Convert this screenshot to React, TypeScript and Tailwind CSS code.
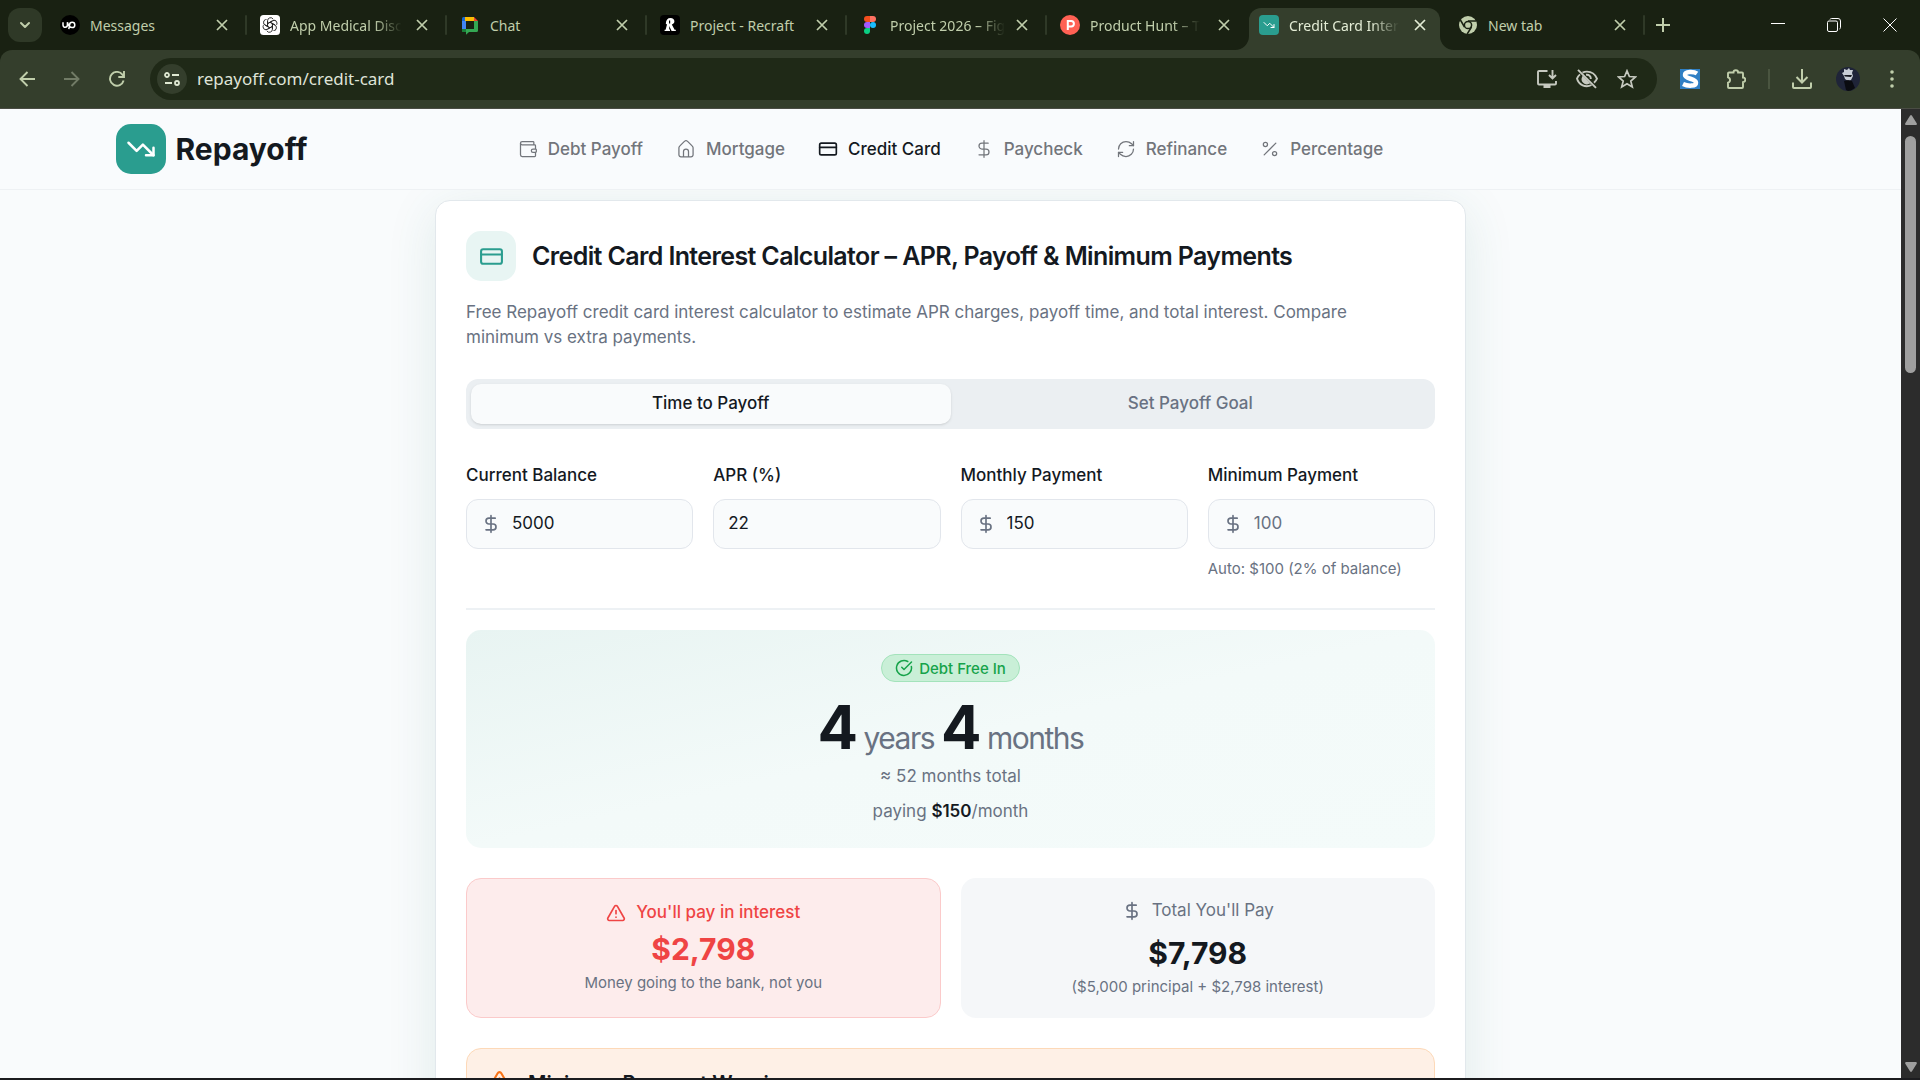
import React from "react";
import {
  ChevronDown,
  CircleCheckBig,
  CreditCard,
  DollarSign,
  Percent,
  RefreshCw,
  TrendingDown,
  TriangleAlert,
  Wallet,
} from "lucide-react";

/* ---------- browser favicons ---------- */

const UpworkIcon = () => (
  <svg viewBox="0 0 20 20" className="size-5">
    <circle cx="10" cy="10" r="10" fill="#000" />
    <path
      d="M3 7.2v2.9a2.2 2.2 0 0 0 4.4 0V7.2c.7 2.6 2.3 5.3 4.8 5.3a2.6 2.6 0 1 0-2.6-2.6L8.8 14.2"
      fill="none"
      stroke="#fff"
      strokeWidth="1.5"
    />
  </svg>
);

const OpenAiIcon = () => (
  <svg viewBox="0 0 20 20" className="size-5">
    <rect width="20" height="20" rx="3.5" fill="#fff" />
    <g fill="none" stroke="#222" strokeWidth=".9">
      {[0, 60, 120, 180, 240, 300].map((a) => (
        <path key={a} transform={`rotate(${a} 10 10)`} d="M7.600 11.400V5.700a3 3 0 0 1 5.600-1.500M7.600 8.600l4.800-2.800" />
      ))}
    </g>
  </svg>
);

const ChatIcon = () => (
  <svg viewBox="0 0 20 20" className="size-5">
    <path d="M5 2h9v4H5z" fill="#fbbc04" />
    <path d="M2 3.5A1.5 1.5 0 0 1 3.5 2H5v4H2z" fill="#1967d2" />
    <path d="M2 6h4v8H2z" fill="#4285f4" />
    <path d="M14 2l4 4h-4z" fill="#ea4335" />
    <path d="M14 6h4v9.5a1.5 1.5 0 0 1-1.5 1.5H9l-3 2.8V17H3.5A1.5 1.5 0 0 1 2 15.500V14h12z" fill="#34a853" />
    <path d="M2 14h4v3H3.5A1.5 1.5 0 0 1 2 15.500z" fill="#188038" />
  </svg>
);

const RecraftIcon = () => (
  <svg viewBox="0 0 20 20" className="size-5">
    <rect width="20" height="20" rx="4" fill="#000" />
    <path
      d="M10.5 3c2.4 0 3.9 1.3 3.9 3.3 0 1.7-1 2.8-2.6 3.2l2.8 5.2h1.2V16h-4.2l-2.4-5v3.6h.8V16H4.6v-1.3h1L7 9.5 5.8 8.8C6 5 7.6 3 10.5 3z"
      fill="#fff"
    />
    <path d="M9.6 5.5v3" stroke="#000" strokeWidth="1.2" />
  </svg>
);

const FigmaIcon = () => (
  <svg viewBox="0 0 20 20" className="size-5">
    <path d="M7 1h3v6H7a3 3 0 0 1 0-6z" fill="#f24e1e" />
    <path d="M10 1h3a3 3 0 0 1 0 6h-3z" fill="#ff7262" />
    <path d="M7 7h3v6H7a3 3 0 0 1 0-6z" fill="#a259ff" />
    <circle cx="13" cy="10" r="3" fill="#1abcfe" />
    <path d="M7 13h3v3a3 3 0 1 1-3-3z" fill="#0acf83" />
  </svg>
);

const ProductHuntIcon = () => (
  <svg viewBox="0 0 20 20" className="size-5">
    <circle cx="10" cy="10" r="10" fill="#ff6154" />
    <path d="M7.8 15V6h3.4a2.7 2.7 0 0 1 0 5.4H7.8" fill="none" stroke="#fff" strokeWidth="2" />
  </svg>
);

const RepayoffIcon = () => (
  <span className="flex size-5 items-center justify-center rounded bg-[#2a9d8f] text-white">
    <TrendingDown className="size-3" />
  </span>
);

const ChromeIcon = () => (
  <svg viewBox="0 0 20 20" className="size-5">
    <circle cx="10" cy="10" r="9" fill="#c0ceab" />
    <circle cx="10" cy="10" r="3.6" fill="none" stroke="#192112" strokeWidth="1.5" />
    <path d="M10 6h8.2M13.500 12l-4.300 7M6.500 12L2.400 5" stroke="#192112" strokeWidth="1.5" fill="none" />
  </svg>
);

/* ---------- browser chrome ---------- */

const TabClose = ({ label }: { label: string }) => (
  <button aria-label={`Close ${label}`} className="flex size-5 shrink-0 items-center justify-center">
    <svg viewBox="0 0 12 12" className="size-3" fill="none" stroke="currentColor" strokeWidth="1.7">
      <path d="M1 1l10 10M11 1L1 11" />
    </svg>
  </button>
);

const tabs = [
  { title: "Messages", icon: <UpworkIcon /> },
  { title: "App Medical Disc", icon: <OpenAiIcon />, fade: true },
  { title: "Chat", icon: <ChatIcon /> },
  { title: "Project - Recraft", icon: <RecraftIcon /> },
  { title: "Project 2026 – Fig", icon: <FigmaIcon />, fade: true },
  { title: "Product Hunt – T", icon: <ProductHuntIcon />, fade: true },
  { title: "Credit Card Inter", icon: <RepayoffIcon />, fade: true, active: true },
  { title: "New tab", icon: <ChromeIcon /> },
];

const TabTitle = ({ title, fade }: { title: string; fade?: boolean }) => (
  <span
    className={
      fade
        ? "ml-2.5 text-[14px] whitespace-nowrap [mask-image:linear-gradient(to_right,black_75%,transparent)]"
        : "ml-2.5 text-[14px] whitespace-nowrap"
    }
  >
    {title}
  </span>
);

const TabFoot = ({ flip }: { flip?: boolean }) => (
  <svg
    viewBox="0 0 14 14"
    className={
      flip ? "absolute bottom-0 left-full size-3.5 -scale-x-100" : "absolute right-full bottom-0 size-3.5"
    }
  >
    <path d="M14 0v14H0A14 14 0 0 0 14 0z" fill="#343e2c" />
  </svg>
);

function TabStrip() {
  return (
    <div className="flex h-[50px] items-center bg-[#192112] pr-0.5 pl-2 text-[#c0ceab]">
      <button
        aria-label="Search tabs"
        className="flex h-[34px] w-[34px] items-center justify-center rounded-xl bg-[#2f3927]"
      >
        <ChevronDown className="size-4" strokeWidth={3} />
      </button>
      <div className="ml-[5px] flex h-full min-w-0">
        {tabs.map((t, i) =>
          t.active ? (
            <div key={t.title} className="flex h-full w-[198px] pl-0.5">
              <div className="relative flex h-[42px] w-[191px] items-center self-end rounded-t-xl bg-[#343e2c] px-2.5 pb-2 text-[#e3ecd5]">
                <TabFoot />
                <TabFoot flip />
                {t.icon}
                <TabTitle title={t.title} fade />
                <span className="flex-1" />
                <TabClose label={t.title} />
              </div>
            </div>
          ) : (
            <div key={t.title} className="flex h-full w-[200px] items-center">
              <div className="flex flex-1 items-center px-[13px]">
                {t.icon}
                <TabTitle title={t.title} fade={t.fade} />
                <span className="flex-1" />
                <TabClose label={t.title} />
              </div>
              {i !== 5 && <div className="h-5 w-0.5 rounded bg-[#2f3927]" />}
            </div>
          ),
        )}
      </div>
      <button aria-label="New tab" className="ml-1 flex size-7 items-center justify-center">
        <svg viewBox="0 0 14 14" className="size-3.5" stroke="currentColor" strokeWidth="2">
          <path d="M7 0v14M0 7h14" />
        </svg>
      </button>
      <div className="ml-auto flex text-white">
        <button aria-label="Minimize" className="flex h-10 w-14 items-center justify-center">
          <svg viewBox="0 0 14 14" className="size-3.5" stroke="currentColor">
            <path d="M0 5.5h14" />
          </svg>
        </button>
        <button aria-label="Restore" className="flex h-10 w-14 items-center justify-center">
          <svg viewBox="0 0 14 14" className="size-3.5" fill="none" stroke="currentColor">
            <rect x=".5" y="3" width="10" height="10.5" rx="1.5" />
            <path d="M3 1.5c.3-.7.7-1 1.5-1H11A2.5 2.5 0 0 1 13.5 3v6.5c0 .8-.4 1.3-1 1.5" />
          </svg>
        </button>
        <button aria-label="Close window" className="flex h-10 w-14 items-center justify-center">
          <svg viewBox="0 0 14 14" className="size-3.5" stroke="currentColor">
            <path d="M.5.5l13 13M13.5.5l-13 13" />
          </svg>
        </button>
      </div>
    </div>
  );
}

const IconButton = ({ label, children }: { label: string; children: React.ReactNode }) => (
  <button aria-label={label} className="flex size-10 shrink-0 items-center justify-center">
    {children}
  </button>
);

function Toolbar() {
  return (
    <div className="bg-[#192112]">
      <div className="flex h-[58px] items-center rounded-t-xl bg-[#343e2c] pl-[7px] text-[#c0ceab]">
        <div className="flex gap-[5px]">
          <IconButton label="Back">
            <svg viewBox="0 0 16 16" className="size-4" fill="none" stroke="currentColor" strokeWidth="1.9">
              <path d="M16 8H1.5M8.5 1L1.5 8l7 7" />
            </svg>
          </IconButton>
          <IconButton label="Forward">
            <svg viewBox="0 0 16 16" className="size-4 text-[#717b66]" fill="none" stroke="currentColor" strokeWidth="1.9">
              <path d="M0 8h14.5M7.5 1l7 7-7 7" />
            </svg>
          </IconButton>
          <IconButton label="Reload">
            <svg viewBox="0 0 16 16" className="size-4" fill="none" stroke="currentColor" strokeWidth="1.9">
              <path d="M14.6 9.5A6.9 6.9 0 1 1 13.4 3.6L15 5.500M15 0v6H9.300" />
            </svg>
          </IconButton>
        </div>
        <div className="ml-[13px] flex h-[42px] flex-1 items-center rounded-full bg-[#1f2917] pr-[10px] pl-[7px]">
          <button
            aria-label="View site information"
            className="flex size-[30px] items-center justify-center rounded-full bg-[#343e2c] text-[#dfe8d2]"
          >
            <svg viewBox="0 0 16 16" className="size-4" fill="none" stroke="currentColor" strokeWidth="1.8">
              <circle cx="3" cy="4" r="2" />
              <path d="M8 4h7M1 12h7" />
              <circle cx="13" cy="12" r="2" />
            </svg>
          </button>
          <input
            aria-label="Address"
            defaultValue="repayoff.com/credit-card"
            className="ml-2.5 min-w-0 flex-1 bg-transparent text-[17px] text-[#dfe3d8] outline-none"
          />
          <div className="flex text-[#c6c9c0]">
            <IconButton label="Install app">
              <svg viewBox="0 0 20 20" className="size-5" fill="none" stroke="currentColor" strokeWidth="1.9">
                <path d="M10.5 2H2a1 1 0 0 0-1 1v11.5a1 1 0 0 0 1 1h16a1 1 0 0 0 1-1V12M15.500 1v8M12 6l3.500 3.500L19 6" />
                <path d="M6.5 17.5h7" strokeWidth="3" />
              </svg>
            </IconButton>
            <IconButton label="Tracking protection">
              <svg viewBox="0 0 24 20" className="h-5 w-6" fill="none" stroke="currentColor" strokeWidth="1.9">
                <path d="M7.5 3.6A10 10 0 0 1 12 2.6c4.3 0 8.2 2.7 10 7-.7 1.6-1.7 3-3 4.200M16.500 16A10 10 0 0 1 2 9.600 11 11 0 0 1 5 5.400M11 5.800c3-.5 5 1.600 4.800 4.200" />
                <path d="M8 8.2A4.3 4.3 0 0 0 13.7 14z" fill="currentColor" />
                <path d="M3 .8l18 18" />
              </svg>
            </IconButton>
            <IconButton label="Bookmark this tab">
              <svg viewBox="0 0 20 20" className="size-5" fill="none" stroke="currentColor" strokeWidth="1.7">
                <path d="M10 1.8l2.4 5.7 6.1.5-4.7 4 1.5 6-5.3-3.2L4.7 18l1.500-6L1.500 8l6.100-.5z" />
              </svg>
            </IconButton>
          </div>
        </div>
        <div className="ml-[13px] flex items-center pr-2">
          <IconButton label="S extension">
            <svg viewBox="0 0 20 20" className="size-5">
              <rect width="20" height="20" fill="#2f7fc4" />
              <path
                d="M17 4.5C14 2.5 5 2 5 6s11 3.5 11 7.700c0 3.600-8 3.700-13 1.300"
                fill="none"
                stroke="#fff"
                strokeWidth="4.5"
              />
            </svg>
          </IconButton>
          <span className="w-[6px]" />
          <IconButton label="Extensions">
            <svg viewBox="0 0 20 20" className="size-5" fill="none" stroke="currentColor" strokeWidth="1.9">
              <path d="M3 3.5h4.5a2.300 2.300 0 0 1 4.600 0H16a1 1 0 0 1 1 1V8.500a2.300 2.300 0 0 1 0 4.600V18a1 1 0 0 1-1 1H3a1 1 0 0 1-1-1v-4.300a2.800 2.800 0 0 0 0-5.400V4.500a1 1 0 0 1 1-1z" />
            </svg>
          </IconButton>
          <span className="mx-3 h-5 w-0.5 bg-[#4a5540]" />
          <IconButton label="Downloads">
            <svg viewBox="0 0 20 20" className="size-5" fill="none" stroke="currentColor" strokeWidth="2">
              <path d="M10 0v13M4.5 8l5.500 5.500L15.500 8M1 13.500V18a1 1 0 0 0 1 1h16a1 1 0 0 0 1-1v-4.500" />
            </svg>
          </IconButton>
          <span className="w-[6px]" />
          <IconButton label="Profile">
            <svg viewBox="0 0 24 24" className="size-6">
              <circle cx="12" cy="12" r="12" fill="#1f2438" />
              <path d="M6 6l2-1 0-3 3 1 2-2 1 2 3 0-1 3 1 3-2 4-3 1-3-2-1-3z" fill="#c9ced6" />
              <path d="M8 8h8l-1 2-6-.5z" fill="#15171f" />
              <path d="M8 14l4-1 4 1 3 7-4 2.600L12 24l-2-1z" fill="#0a0b10" />
            </svg>
          </IconButton>
          <span className="w-1" />
          <IconButton label="Menu">
            <svg viewBox="0 0 4 18" className="h-[18px] w-1" fill="currentColor">
              <circle cx="2" cy="2" r="1.8" />
              <circle cx="2" cy="9" r="1.8" />
              <circle cx="2" cy="16" r="1.8" />
            </svg>
          </IconButton>
        </div>
      </div>
      <div className="h-px bg-[#4a4c44]" />
    </div>
  );
}

/* ---------- page ---------- */

type IconProps = { className?: string; strokeWidth?: number };

const HomeIcon = ({ className, strokeWidth }: IconProps) => (
  <svg
    viewBox="0 0 24 24"
    className={className}
    fill="none"
    stroke="currentColor"
    strokeWidth={strokeWidth}
    strokeLinejoin="round"
  >
    <path d="M3.5 10.600c0-.8.300-1.500.900-2l6-6a2.200 2.200 0 0 1 3.200 0l6 6c.600.500.900 1.200.900 2V19a2.500 2.500 0 0 1-2.500 2.500H6A2.500 2.500 0 0 1 3.500 19z" />
    <path d="M9 21.500V15a3 3 0 0 1 6 0v6.500" />
  </svg>
);

const navItems = [
  { label: "Debt Payoff", Icon: Wallet },
  { label: "Mortgage", Icon: HomeIcon },
  { label: "Credit Card", Icon: CreditCard, active: true },
  { label: "Paycheck", Icon: DollarSign },
  { label: "Refinance", Icon: RefreshCw },
  { label: "Percentage", Icon: Percent },
];

function SiteHeader() {
  return (
    <header className="relative z-10 border-b border-[#eef1f4] bg-[#f9fbfd]">
      <div className="mx-auto grid h-20 max-w-[1750px] grid-cols-[1fr_auto_1fr] items-center px-10">
        <a href="#" className="flex items-center gap-2.5">
          <span className="flex size-[50px] items-center justify-center rounded-[15px] bg-[#2a9d8f] text-white">
            <TrendingDown className="size-[30px]" />
          </span>
          <span className="text-[30px] leading-9 font-bold text-[#14191f]">Repayoff</span>
        </a>
        <nav className="flex gap-[33px]">
          {navItems.map(({ label, Icon, active }) => (
            <a
              key={label}
              href="#"
              className={
                active
                  ? "flex items-center gap-2.5 text-[17px] leading-[26px] font-medium text-[#14191f]"
                  : "flex items-center gap-2.5 text-[17px] leading-[26px] font-medium text-[#72757b]"
              }
            >
              <Icon className="size-5" strokeWidth={active ? 2 : 1.5} />
              {label}
            </a>
          ))}
        </nav>
      </div>
    </header>
  );
}

type FieldProps = { id: string; label: string; value?: string; placeholder?: string; money?: boolean; hint?: string };

const Field = ({ id, label, value, placeholder, money, hint }: FieldProps) => (
  <div className="flex flex-col">
    <label htmlFor={id} className="mb-3 text-[17px] leading-6 font-medium">
      {label}
    </label>
    <div className="flex h-[50px] items-center rounded-xl border border-[#e2e6ec] bg-[#f9fbfc] pr-[15px] pl-3.5">
      {money && <DollarSign className="mr-[11px] size-5 shrink-0 text-[#697282]" />}
      <input
        id={id}
        defaultValue={value}
        placeholder={placeholder}
        className="w-full min-w-0 bg-transparent text-[17px] outline-none placeholder:text-[#697282]"
      />
    </div>
    {hint && <p className="mt-2.5 text-[15px] leading-5 text-[#697282]">{hint}</p>}
  </div>
);

function Calculator() {
  return (
    <section className="mx-auto w-full max-w-[1031px] shrink-0 rounded-[15px] border border-[#e2e8ec] bg-white p-[30px] text-[#14191f] shadow-[0_10px_50px_rgba(42,120,110,0.12)]">
      <div className="flex items-center gap-4">
        <span className="flex size-[50px] items-center justify-center rounded-[15px] bg-[#e8f5f3] text-[#2a9d8f]">
          <CreditCard className="size-[25px]" />
        </span>
        <h1 className="text-[25px] leading-[30px] font-semibold tracking-tight">
          Credit Card Interest Calculator – APR, Payoff &amp; Minimum Payments
        </h1>
      </div>
      <p className="mt-[19px] max-w-[930px] text-[17px] leading-[25px] text-[#697282]">
        Free Repayoff credit card interest calculator to estimate APR charges, payoff time, and total interest. Compare
        minimum vs extra payments.
      </p>

      <div
        role="tablist"
        className="mt-[29px] grid h-[50px] grid-cols-2 rounded-xl bg-[#ebeff2] p-[5px] text-[17px] font-medium"
      >
        <button role="tab" aria-selected="true" className="rounded-[10px] bg-[#f9fbfc] shadow-sm">
          Time to Payoff
        </button>
        <button role="tab" aria-selected="false" className="text-[#697282]">
          Set Payoff Goal
        </button>
      </div>

      <form className="mt-[34px] grid grid-cols-4 gap-5">
        <Field id="balance" label="Current Balance" value="5000" money />
        <Field id="apr" label="APR (%)" value="22" />
        <Field id="monthly" label="Monthly Payment" value="150" money />
        <Field id="minimum" label="Minimum Payment" placeholder="100" money hint="Auto: $100 (2% of balance)" />
      </form>

      <hr className="mt-[29px] mb-5 border-t-2 border-[#edf1f4]" />

      <div className="flex flex-col items-center rounded-[15px] bg-linear-to-br from-[#e8f4f2] via-[#f3faf9] to-[#f4fbfa] py-6 text-[17px] leading-[25px] text-[#697282]">
        <span className="flex h-7 items-center gap-1.5 rounded-full border border-[#a3e3bb] bg-[#c9efd7] px-[13px] text-[15px] font-medium text-[#16a34a]">
          <CircleCheckBig className="size-[18px]" />
          Debt Free In
        </span>
        <p className="mt-[15px] text-[60px] leading-[60px] font-bold tracking-tight text-[#14191f]">
          4<span className="text-[30px] leading-none font-normal text-[#697282]"> years </span>4
          <span className="text-[30px] leading-none font-normal text-[#697282]"> months</span>
        </p>
        <p className="mt-[7px]">≈ 52 months total</p>
        <p className="mt-2.5">
          paying <strong className="font-semibold text-[#14191f]">$150</strong>/month
        </p>
      </div>

      <div className="mt-[30px] grid h-[140px] grid-cols-2 gap-5 text-center">
        <div className="rounded-[15px] border border-[#fbcaca] bg-[#fdecec] pt-[21px]">
          <p className="flex items-center justify-center gap-2.5 text-[17px] leading-[25px] font-medium text-[#ef4444]">
            <TriangleAlert className="size-5" />
            You'll pay in interest
          </p>
          <p className="mt-1 text-[30px] leading-10 font-bold text-[#ef4444]">$2,798</p>
          <p className="mt-1 text-[15px] leading-5 text-[#697282]">Money going to the bank, not you</p>
        </div>
        <div className="rounded-[15px] bg-[#f5f7f9] pt-5">
          <p className="flex items-center justify-center gap-2.5 text-[17px] leading-[25px] text-[#697282]">
            <DollarSign className="size-5" />
            Total You'll Pay
          </p>
          <p className="mt-2.5 text-[30px] leading-10 font-bold">$7,798</p>
          <p className="mt-1 text-[15px] leading-5 text-[#697282]">($5,000 principal + $2,798 interest)</p>
        </div>
      </div>

      <div className="mt-[30px] flex h-40 gap-4 rounded-[15px] border border-[#fdd9b8] bg-[#fef0e6] px-5 pt-5">
        <TriangleAlert className="size-[25px] text-[#f97316]" />
        <h2 className="text-[20px] leading-7 font-semibold">Minimum Payment Warning</h2>
      </div>
    </section>
  );
}

const ScrollRail = () => (
  <div className="flex w-[19px] shrink-0 flex-col items-center bg-[#2c2c2c] py-1.5">
    <svg viewBox="0 0 12 10" className="h-2.5 w-3" fill="#9f9f9f">
      <path d="M5 .8a1.2 1.2 0 0 1 2 0l4.7 7.5A1.1 1.1 0 0 1 10.8 10H1.2A1.1 1.1 0 0 1 .3 8.300z" />
    </svg>
    <div className="mt-[11px] h-[237px] w-[11px] rounded-full bg-[#9f9f9f]" />
    <svg viewBox="0 0 12 10" className="mt-auto h-2.5 w-3 rotate-180" fill="#9f9f9f">
      <path d="M5 .8a1.2 1.2 0 0 1 2 0l4.7 7.5A1.1 1.1 0 0 1 10.8 10H1.2A1.1 1.1 0 0 1 .3 8.300z" />
    </svg>
  </div>
);

export default function App() {
  return (
    <div className="flex h-screen flex-col overflow-hidden">
      <div className="font-['Noto_Sans',sans-serif]">
        <TabStrip />
        <Toolbar />
      </div>
      <div className="flex min-h-0 flex-1 border-b-2 border-[#1c1c1f] font-[Inter,sans-serif]">
        <div className="flex min-w-0 flex-1 flex-col overflow-hidden bg-[#f9fbfc]">
          <SiteHeader />
          <main className="flex min-h-0 flex-1 flex-col px-4 pt-2.5">
            <Calculator />
          </main>
        </div>
        <ScrollRail />
      </div>
    </div>
  );
}
